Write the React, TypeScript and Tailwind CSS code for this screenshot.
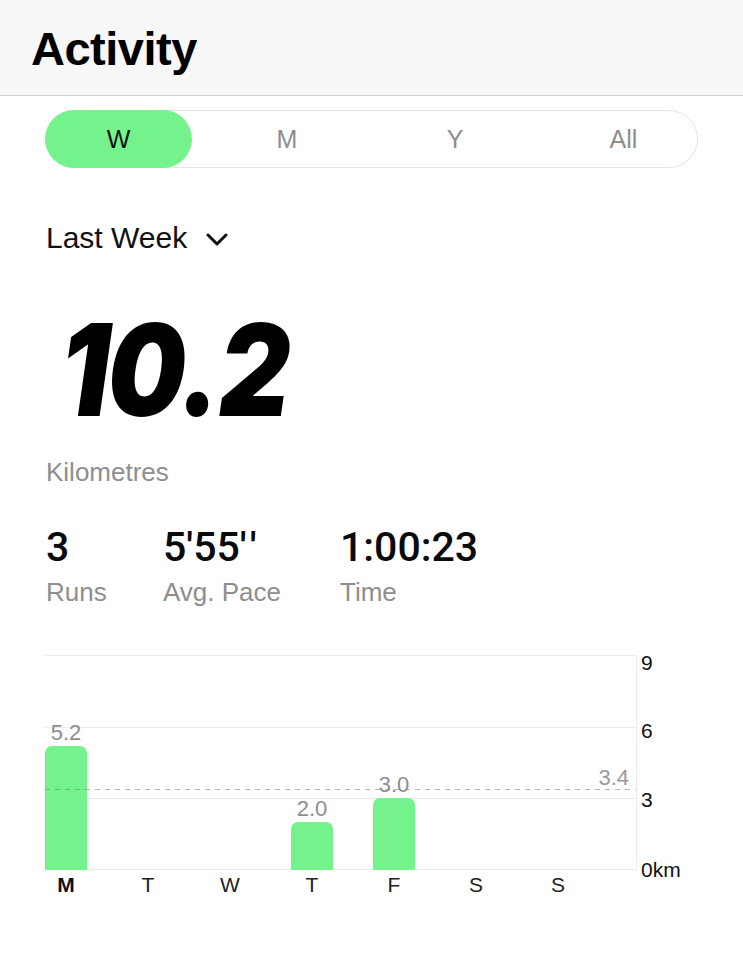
import React from 'react'

const sans = { fontFamily: '"Liberation Sans", Arial, sans-serif' }

const days = [
  { d: 'M', v: 5.2, bold: true },
  { d: 'T', v: 0 },
  { d: 'W', v: 0 },
  { d: 'T', v: 2.0 },
  { d: 'F', v: 3.0 },
  { d: 'S', v: 0 },
  { d: 'S', v: 0 },
]

// 215px chart height for 9 km
const PX_PER_KM = 215 / 9

function Chevron() {
  return (
    <svg width="22" height="13" viewBox="0 0 22 13" fill="none" className="ml-[19px] mt-[10px]">
      <path d="M2 2l9 9 9-9" stroke="#111" strokeWidth="3" strokeLinecap="round" strokeLinejoin="round" />
    </svg>
  )
}

function Segments() {
  return (
    <div className="mx-[45px] mt-[14px] flex h-[58px] items-stretch rounded-full border border-[#e3e3e3] text-[25px] leading-none text-[#8e8e8e]">
      <div className="-my-px -ml-px flex w-[147px] items-center justify-center rounded-full bg-[#74f38c] text-[#111]">W</div>
      <div className="flex w-[190px] items-center justify-center">M</div>
      <div className="flex w-[146px] items-center justify-center">Y</div>
      <div className="flex flex-1 items-center justify-center pl-[22px]">All</div>
    </div>
  )
}

function Stat({ value, label, width }: { value: React.ReactNode; label: string; width: string }) {
  return (
    <div className={width}>
      <div className="text-[41px] leading-none font-medium text-[#0a0a0a]" style={{ fontFamily: 'Roboto, "Liberation Sans", sans-serif' }}>
        {value}
      </div>
      <div className="mt-[11px] text-[26px] leading-none text-[#8e8e8e]">{label}</div>
    </div>
  )
}

function Chart() {
  return (
    <div className="ml-[45px] mt-[50px]">
      <div className="relative h-[215px] w-[592px] border-r border-[#ececec]">
        <div className="absolute inset-x-0 top-0 h-px bg-[#ececec]" />
        <div className="absolute inset-x-0 top-[72px] h-px bg-[#ececec]" />
        <div className="absolute inset-x-0 top-[143px] h-px bg-[#ececec]" />
        <div className="absolute inset-x-0 bottom-0 h-px bg-[#ececec]" />

        <div className="absolute inset-0 flex items-end gap-[40px]">
          {days.map((x, i) => (
            <div key={i} className="flex w-[42px] flex-col items-center">
              {x.v > 0 && (
                <>
                  <div className="mb-[2px] text-[22px] leading-none text-[#8e8e8e]">{x.v.toFixed(1)}</div>
                  <div className="w-full rounded-t-[7px] bg-[#74f38c]" style={{ height: Math.round(x.v * PX_PER_KM) }} />
                </>
              )}
            </div>
          ))}
        </div>

        {/* average line */}
        <div className="absolute inset-x-0 top-[134px] h-px bg-[linear-gradient(to_right,rgba(120,120,120,0.55)_50%,transparent_50%)] bg-[length:10px_1px]" />
        <div className="absolute right-[7px] top-[112px] text-[22px] leading-none text-[#9a9a9a]">3.4</div>

        <div className="absolute left-[596px] top-[-3px] text-[21px] leading-none text-[#111]">9</div>
        <div className="absolute left-[596px] top-[65px] text-[21px] leading-none text-[#111]">6</div>
        <div className="absolute left-[596px] top-[134px] text-[21px] leading-none text-[#111]">3</div>
        <div className="absolute left-[596px] top-[204px] text-[21px] leading-none text-[#111]">0km</div>
      </div>
      <div className="mt-[4px] flex gap-[40px]">
        {days.map((x, i) => (
          <div key={i} className={`w-[42px] text-center text-[21px] leading-none ${x.bold ? 'font-bold text-[#111]' : 'text-[#222]'}`}>
            {x.d}
          </div>
        ))}
      </div>
    </div>
  )
}

export default function App() {
  return (
    <div className="min-h-[960px] w-[743px] bg-white" style={sans}>
      <div className="h-[96px] border-b border-[#cfcfcf] bg-[#f7f7f7] px-[31px] pt-[25px]">
        <h1 className="text-[47px] leading-none font-bold tracking-[-0.5px] text-black">Activity</h1>
      </div>

      <Segments />

      <div className="mx-[46px] mt-[55px] flex items-start text-[30px] leading-none text-[#111]">
        <span>Last Week</span>
        <Chevron />
      </div>

      <div
        className="ml-[60px] mt-[53px] origin-left scale-x-[0.86] text-[128px] leading-none font-black italic tracking-[-0.02em] text-black"
        style={{ fontFamily: 'Inter, "Liberation Sans", sans-serif' }}
      >
        10.2
      </div>

      <div className="ml-[46px] mt-[25px] text-[26px] leading-none text-[#8e8e8e]">Kilometres</div>

      <div className="ml-[46px] mt-[42px] flex">
        <Stat value="3" label="Runs" width="w-[117px]" />
        <Stat
          value={
            <>
              5'55'<span className="ml-[3px]">'</span>
            </>
          }
          label="Avg. Pace"
          width="w-[177px]"
        />
        <Stat value="1:00:23" label="Time" width="w-[200px]" />
      </div>

      <Chart />
    </div>
  )
}
